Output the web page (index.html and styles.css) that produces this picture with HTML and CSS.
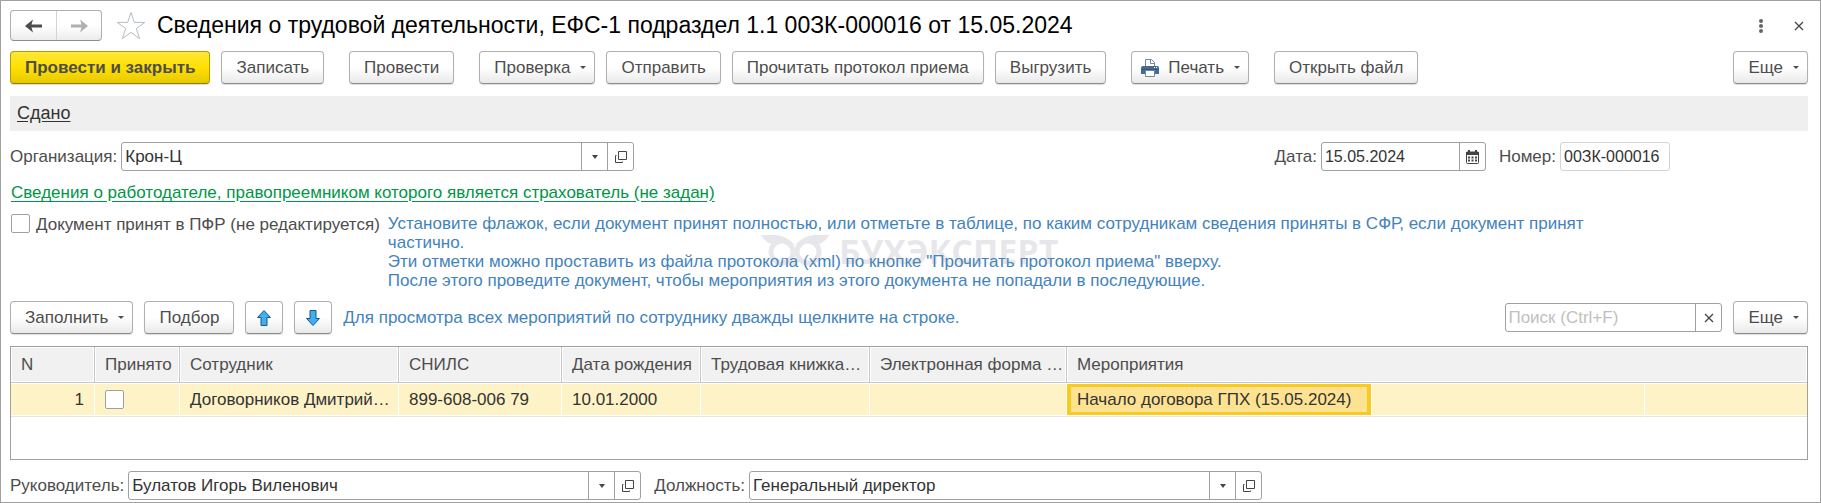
FILE: index.html
```html
<!DOCTYPE html>
<html lang="ru">
<head>
  <meta charset="UTF-8">
  <title>Сведения о трудовой деятельности, ЕФС-1</title>
  <link rel="stylesheet" href="styles.css">
</head>
<body>
  <svg class="sprite" aria-hidden="true">
    <symbol id="icon-open" viewBox="0 0 14 14">
      <path d="M4.500 1.500h8v8h-8z M2.500 5.500h-1v7h7v-1" fill="none" stroke="#444"/>
    </symbol>
    <symbol id="icon-close" viewBox="0 0 10 10">
      <path d="M1 1l8 8M9 1L1 9" fill="none" stroke="#444" stroke-width="1.3"/>
    </symbol>
  </svg>

  <main class="window">
    <header class="title-bar">
      <div class="nav">
        <button type="button" aria-label="Назад">
          <svg width="18" height="14" viewBox="0 0 18 14"><path d="M0 7l8-6.500-1.500 5H17v3H6.500l1.500 5z" fill="#4d4d4d"/></svg>
        </button>
        <button type="button" aria-label="Вперед">
          <svg width="18" height="14" viewBox="0 0 18 14"><path d="M18 7l-8-6.500 1.500 5H1v3h10.500l-1.500 5z" fill="#b0b0b0"/></svg>
        </button>
      </div>
      <button type="button" class="plain star" aria-label="Избранное">
        <svg width="30" height="30" viewBox="0 0 30 30"><path d="M15 1.500l3.300 9.900h10.500l-8.500 6.100 3.400 10.200-8.700-6.300-8.700 6.300 3.400-10.200-8.500-6.100h10.500z" fill="#fff" stroke="#b4bbc2"/></svg>
      </button>
      <h1>Сведения о трудовой деятельности, ЕФС-1 подраздел 1.1 00ЗК-000016 от 15.05.2024</h1>
      <button type="button" class="plain kebab" aria-label="Меню">
        <svg width="6" height="16" viewBox="0 0 6 16" fill="#666"><circle cx="3" cy="3" r="2"/><circle cx="3" cy="8" r="2"/><circle cx="3" cy="13" r="2"/></svg>
      </button>
      <button type="button" class="plain" aria-label="Закрыть">
        <svg width="10" height="10"><use href="#icon-close"/></svg>
      </button>
    </header>

    <div class="toolbar">
      <div class="group">
        <button type="button" class="btn primary">Провести и закрыть</button>
        <button type="button" class="btn">Записать</button>
      </div>
      <button type="button" class="btn">Провести</button>
      <div class="group">
        <button type="button" class="btn drop">Проверка</button>
        <button type="button" class="btn">Отправить</button>
        <button type="button" class="btn">Прочитать протокол приема</button>
        <button type="button" class="btn">Выгрузить</button>
      </div>
      <button type="button" class="btn drop print">
        <svg width="18" height="18" viewBox="0 0 18 18">
          <path d="M4.500 8V.5h6l3 3V8" fill="#fff" stroke="#6f88a3"/>
          <path d="M9.500 1v3.500h4" fill="none" stroke="#6f88a3"/>
          <path d="M2 7h14q2 0 2 2v6H0V9q0-2 2-2z" fill="#47698f"/>
          <path d="M1 10.500h16" stroke="#35557a"/>
          <path d="M13 8.500h1M15 8.500h1" stroke="#fff"/>
          <path d="M4.500 11.500h9v6h-9z" fill="#fff" stroke="#6f88a3"/>
        </svg>
        Печать
      </button>
      <button type="button" class="btn">Открыть файл</button>
      <button type="button" class="btn drop push">Еще</button>
    </div>

    <div class="status"><a href="#">Сдано</a></div>

    <div class="row">
      <label for="org">Организация:</label>
      <div class="field wide">
        <input type="text" id="org" value="Крон-Ц">
        <button type="button" class="arrow" aria-label="Выбрать организацию"></button>
        <button type="button" aria-label="Открыть организацию"><svg width="14" height="14"><use href="#icon-open"/></svg></button>
      </div>
      <div class="doc-info">
        <label for="date">Дата:</label>
        <div class="field date">
          <input type="text" id="date" value="15.05.2024">
          <button type="button" aria-label="Календарь">
            <svg width="13" height="14" viewBox="0 0 13 14">
              <path d="M1.500 2h10q1 0 1 1v9.500q0 1-1 1h-10q-1 0-1-1V3q0-1 1-1z" fill="#fff" stroke="#444"/>
              <path d="M0 2h13v3H0zM2 0h2v3H2zM9 0h2v3H9z" fill="#444"/>
              <path d="M2 7.500h9M2 10.500h9" stroke="#444" stroke-width="2" stroke-dasharray="2 1.500"/>
            </svg>
          </button>
        </div>
        <label for="number">Номер:</label>
        <div class="field number"><input type="text" id="number" value="00ЗК-000016" readonly></div>
      </div>
    </div>

    <a href="#" class="employer">Сведения о работодателе, правопреемником которого является страхователь (не задан)</a>

    <div class="accept">
      <input type="checkbox" id="accepted">
      <label for="accepted">Документ принят в ПФР (не редактируется)</label>
      <p class="hint">Установите флажок, если документ принят полностью, или отметьте в таблице, по каким сотрудникам сведения приняты в СФР, если документ принят частично.<br>
        Эти отметки можно проставить из файла протокола (xml) по кнопке "Прочитать протокол приема" вверху.<br>
        После этого проведите документ, чтобы мероприятия из этого документа не попадали в последующие.</p>
      <div class="watermark">
        <svg width="68" height="34" viewBox="0 0 68 34">
          <path d="M0 1h15q11 1 19 10Q42 2 53 1h15q-4 7-10 9H10Q4 8 0 1z"/>
          <circle cx="21" cy="18" r="11" class="eye"/>
          <circle cx="47" cy="18" r="11" class="eye"/>
          <path d="M29 25h10l-5 9z"/>
        </svg>
        <span>БУХЭКСПЕРТ</span>
      </div>
    </div>

    <div class="commands">
      <button type="button" class="btn drop">Заполнить</button>
      <button type="button" class="btn">Подбор</button>
      <button type="button" class="btn move" aria-label="Вверх">
        <svg width="16" height="18" viewBox="0 0 16 18"><path d="M8 1.500l6.500 7H11V16.500H5V8.500H1.500z" fill="#41aef0" stroke="#15598c"/></svg>
      </button>
      <button type="button" class="btn move" aria-label="Вниз">
        <svg width="16" height="18" viewBox="0 0 16 18"><path d="M8 16.500l6.500-7H11V1.500H5v8H1.500z" fill="#41aef0" stroke="#15598c"/></svg>
      </button>
      <span class="hint">Для просмотра всех мероприятий по сотруднику дважды щелкните на строке.</span>
      <div class="field search push">
        <input type="text" placeholder="Поиск (Ctrl+F)" aria-label="Поиск">
        <button type="button" aria-label="Очистить"><svg width="10" height="10"><use href="#icon-close"/></svg></button>
      </div>
      <button type="button" class="btn drop">Еще</button>
    </div>

    <div class="grid">
      <table>
        <colgroup>
          <col class="c-num"><col class="c-accepted"><col class="c-person"><col class="c-snils"><col class="c-birth">
          <col class="c-book"><col class="c-electronic"><col class="c-event"><col class="c-event-2"><col>
        </colgroup>
        <thead>
          <tr>
            <th>N</th>
            <th>Принято</th>
            <th>Сотрудник</th>
            <th>СНИЛС</th>
            <th>Дата рождения</th>
            <th>Трудовая книжка…</th>
            <th>Электронная форма …</th>
            <th colspan="3">Мероприятия</th>
          </tr>
        </thead>
        <tbody>
          <tr>
            <td class="num">1</td>
            <td><input type="checkbox" aria-label="Принято"></td>
            <td>Договорников Дмитрий…</td>
            <td>899-608-006 79</td>
            <td>10.01.2000</td>
            <td></td>
            <td></td>
            <td class="current">Начало договора ГПХ (15.05.2024)</td>
            <td></td>
            <td></td>
          </tr>
        </tbody>
      </table>
    </div>

    <div class="row">
      <label for="head">Руководитель:</label>
      <div class="field wide">
        <input type="text" id="head" value="Булатов Игорь Виленович">
        <button type="button" class="arrow" aria-label="Выбрать руководителя"></button>
        <button type="button" aria-label="Открыть руководителя"><svg width="14" height="14"><use href="#icon-open"/></svg></button>
      </div>
      <label for="position">Должность:</label>
      <div class="field wide">
        <input type="text" id="position" value="Генеральный директор">
        <button type="button" class="arrow" aria-label="Выбрать должность"></button>
        <button type="button" aria-label="Открыть должность"><svg width="14" height="14"><use href="#icon-open"/></svg></button>
      </div>
    </div>
  </main>
</body>
</html>
```
FILE: styles.css
```css
* { box-sizing: border-box; }
body {
  margin: 0;
  font-family: "Liberation Sans", Arial, sans-serif;
  font-size: 17px;
  line-height: 19px;
  color: #4d4d4d;
  background: #fff;
}
button, input {
  font: inherit;
  color: inherit;
}
.sprite {
  display: none;
}
.window {
  min-height: 100vh;
  border: 1px solid #a0a0a0;
  padding: 9px 12px 2px 9px;
}
.push {
  margin-left: auto;
}

/* Title bar */
.title-bar {
  display: flex;
  align-items: center;
  height: 31px;
}
.nav {
  display: flex;
  border: 1px solid #b0b0b0;
  border-bottom-color: #8c8c8c;
  border-radius: 4px;
  background: linear-gradient(#fff 50%, #ececec);
}
.nav button {
  display: flex;
  align-items: center;
  justify-content: center;
  width: 45px;
  height: 29px;
  border: 0;
  padding: 0;
  background: none;
}
.nav button + button {
  border-left: 1px solid #d4d4d4;
}
.plain {
  display: flex;
  border: 0;
  padding: 0;
  background: none;
}
.star {
  margin: 0 11px 0 14px;
}
h1 {
  flex: 1;
  margin: 0;
  padding-bottom: 2px;
  font-size: 23px;
  line-height: 28px;
  font-weight: normal;
  color: #000;
  white-space: nowrap;
}
.kebab {
  margin-right: 30px;
}
.title-bar > :last-child {
  margin-right: 4px;
}

/* Buttons */
.toolbar {
  display: flex;
  gap: 25px;
  margin-top: 10px;
}
.group {
  display: flex;
  gap: 11px;
}
.btn {
  display: flex;
  align-items: center;
  justify-content: center;
  height: 33px;
  border: 1px solid #b0b0b0;
  border-bottom-color: #8c8c8c;
  border-radius: 4px;
  padding: 0 14px;
  background: linear-gradient(#fff 50%, #e9e9e9);
  box-shadow: 0 1px 1px #ddd;
  white-space: nowrap;
}
.primary {
  border-color: #b39b00;
  border-bottom-color: #8f7c00;
  background: linear-gradient(#ffe83a, #ffe000 50%, #e8c900);
  font-weight: bold;
}
.drop {
  padding-right: 8px;
}
.drop::after {
  content: "";
  margin-left: 10px;
  border: 3px solid transparent;
  border-top-color: #4d4d4d;
  border-bottom: 0;
}
.print {
  padding-left: 9px;
}
.print svg {
  margin-right: 9px;
}

.status {
  margin-top: 12px;
  padding: 8px 7px;
  background: #efefef;
  font-size: 18px;
}
.status a {
  color: #333;
  text-underline-offset: 2px;
}

/* Fields */
.row {
  display: flex;
  align-items: center;
  margin-top: 11px;
  gap: 4px;
}
.field {
  display: flex;
  height: 29px;
  border: 1px solid #a0a0a0;
  border-radius: 3px;
  background: #fff;
}
.field input {
  flex: 1;
  min-width: 0;
  border: 0;
  padding: 0 3px;
  background: none;
  color: #333;
  outline: 0;
}
.field button {
  display: flex;
  align-items: center;
  justify-content: center;
  width: 26px;
  border: 0;
  border-left: 1px solid #a0a0a0;
  padding: 0;
  background: none;
}
.arrow::after {
  content: "";
  border: 3px solid transparent;
  border-top: 4px solid #444;
  border-bottom: 0;
}
.wide {
  width: 513px;
}
.doc-info {
  display: flex;
  align-items: center;
  gap: 4px;
  margin-left: auto;
  margin-right: 138px;
}
.doc-info .field {
  font-size: 16px;
}
.field + label {
  margin-left: 9px;
}
.date {
  width: 165px;
}
.number {
  width: 110px;
  border-color: #d4d4d4;
}
.search {
  width: 217px;
}
.search input {
  padding: 0 2px;
}
.search input::placeholder {
  color: #c0c0c0;
}

.employer {
  display: table;
  margin: 12px 0 0 1px;
  color: #009646;
  text-underline-offset: 3px;
}

/* Acceptance flag and hint */
input[type="checkbox"] {
  appearance: none;
  flex: none;
  display: block;
  width: 19px;
  height: 19px;
  margin: 0;
  border: 1px solid #a0a0a0;
  border-radius: 2px;
  background: #fff;
}
.accept {
  position: relative;
  display: flex;
  align-items: flex-start;
  margin-top: 12px;
  padding-left: 1px;
}
.accept label {
  margin: 1px 8px 0 6px;
  white-space: nowrap;
}
.hint {
  margin: 0;
  color: #4383bd;
}
.accept .hint {
  flex: 0 1 1220px;
}
.watermark {
  position: absolute;
  left: 751px;
  top: 20px;
  display: flex;
  align-items: center;
  gap: 10px;
  font: bold 34px/34px "Open Sans", sans-serif;
  color: #8c8ca0;
  fill: #8c8ca0;
  opacity: 0.2;
  pointer-events: none;
}
.watermark .eye {
  fill: #fff;
  stroke: #8c8ca0;
  stroke-width: 5px;
}

/* Table */
.commands {
  display: flex;
  align-items: center;
  gap: 11px;
  margin-top: 11px;
}
.move {
  width: 38px;
  padding: 0;
}
.grid {
  min-height: 114px;
  margin-top: 12px;
  border: 1px solid #a0a0a0;
}
table {
  width: 100%;
  table-layout: fixed;
  border-collapse: separate;
  border-spacing: 0;
}
.c-num { width: 84px; }
.c-accepted { width: 85px; }
.c-person { width: 219px; }
.c-snils { width: 163px; }
.c-birth { width: 139px; }
.c-book { width: 169px; }
.c-electronic { width: 197px; }
.c-event { width: 305px; }
.c-event-2 { width: 273px; }
th, td {
  padding: 0 10px;
  text-align: left;
  font-weight: normal;
  white-space: nowrap;
}
th {
  height: 36px;
  border-right: 1px solid #c8c8c8;
  border-bottom: 1px solid #c8c8c8;
  background: #f1f1f1;
  box-shadow: inset 0 0 0 1px #fff;
}
td {
  height: 34px;
  border-right: 1px solid #fff;
  border-bottom: 1px solid #e4e4e4;
  background: #fef2c7;
  box-shadow: inset 0 1px #fff, inset 0 -1px #fff;
  color: #333;
}
th:last-child, td:last-child {
  border-right: 0;
}
.num {
  text-align: right;
}
.current {
  background: #fde391;
  box-shadow: inset 0 1px #fff, inset 0 -1px #fff, inset 0 0 0 4px #f9ca1f;
}
```
